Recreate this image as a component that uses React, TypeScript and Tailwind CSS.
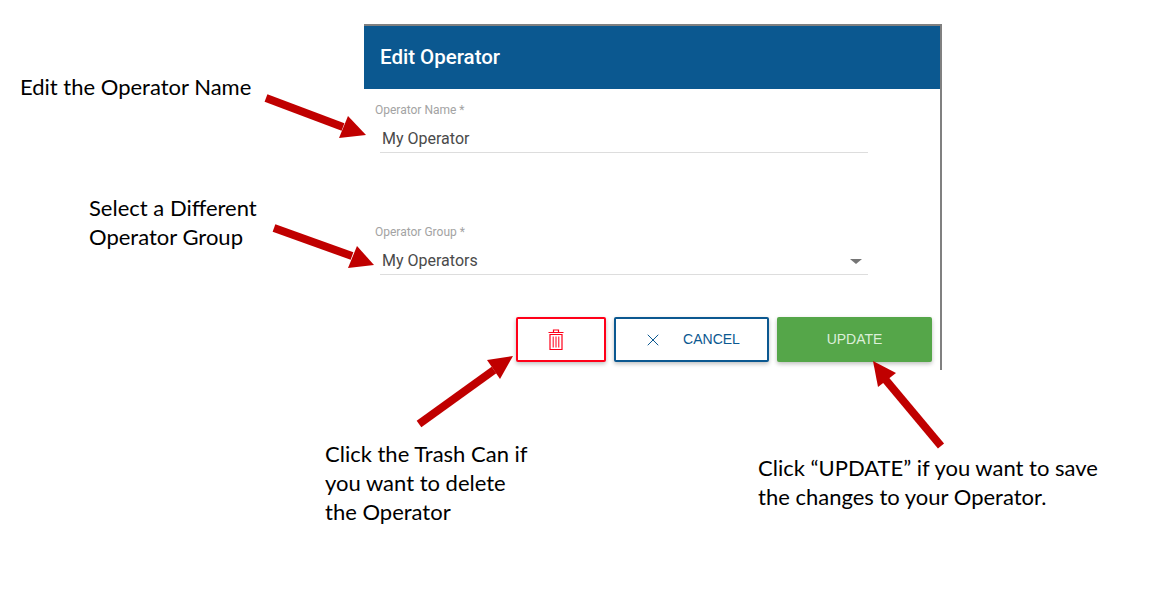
import React from 'react';
import { X } from 'lucide-react';

const arrows = [
  { tail: '266,98 343,127', head: '366,135 348,116 339,138' },
  { tail: '274,228 352,256', head: '374,265 357,246 348,268' },
  { tail: '419,424 494,370', head: '513,356 487,360 500,379' },
  { tail: '941,446 885,379', head: '873,361 896,373 878,387' },
];

function TrashIcon() {
  return (
    <svg className="mr-[10px]" width="16" height="21" viewBox="0 0 16 21" fill="none" stroke="#ff0019" strokeWidth="1.2">
      <path d="M0.5 3.5h15M5.5 3.5V1h5v2.5M2 5.5h12v15H2z" />
      <path d="M5.2 7.5v11M8 7.5v11M10.8 7.5v11" strokeWidth="1" />
    </svg>
  );
}

function Field({ label, value, select }: { label: string; value: string; select?: boolean }) {
  return (
    <div className="w-[488px]">
      <div className="-ml-[5px] h-[14px] text-[12px] leading-[14px] text-[#a3a3a3]">{label}</div>
      <div className="mt-[7px] flex h-[29px] items-center justify-between border-b border-[#dddddd] pl-[2px] pr-[6px] pt-[2px] text-[16px] text-[#4a4a4a]">
        <span>{value}</span>
        {select && <span className="h-0 w-0 border-x-[6px] border-t-[5px] border-x-transparent border-t-[#757575]" />}
      </div>
    </div>
  );
}

export default function App() {
  return (
    <div className="relative h-[602px] w-[1150px] overflow-hidden bg-white pl-[364px] pt-[24px] font-['Roboto',sans-serif]">
      <div className="h-[346px] w-[578px] border-r-2 border-t-2 border-[#808080]">
        <div className="flex h-[63px] items-center bg-[#0b5890] pb-[1px] pl-[16px] text-[20.5px] font-medium text-white">
          Edit Operator
        </div>
        <div className="flex flex-col pl-[16px] pt-[14px]">
          <Field label="Operator Name *" value="My Operator" />
          <div className="mt-[72px]">
            <Field label="Operator Group *" value="My Operators" select />
          </div>
          <div className="mt-[42px] flex gap-[8px] pl-[136px] font-['Liberation_Sans',sans-serif]">
            <button className="flex h-[45px] w-[90px] items-center justify-center rounded-[2px] border-2 border-[#ff0019] bg-white shadow-[0_2px_4px_rgba(0,0,0,0.25)]">
              <TrashIcon />
            </button>
            <button className="flex h-[45px] w-[155px] items-center justify-center gap-[20px] rounded-[2px] border-2 border-[#0b5890] bg-white text-[14px] text-[#0b5890] shadow-[0_2px_4px_rgba(0,0,0,0.25)]">
              <X size={20} strokeWidth={1.2} />
              CANCEL
            </button>
            <button className="flex h-[45px] w-[155px] items-center justify-center rounded-[2px] bg-[#55a649] text-[14px] text-[#dcefd9] shadow-[0_2px_4px_rgba(0,0,0,0.25)]">
              UPDATE
            </button>
          </div>
        </div>
      </div>

      <svg className="absolute left-0 top-0" width="1150" height="602">
        {arrows.map((a) => (
          <g key={a.head}>
            <polyline points={a.tail} stroke="#c00000" strokeWidth="8" fill="none" />
            <polygon points={a.head} fill="#c00000" />
          </g>
        ))}
      </svg>

      <div className="font-['Lato',sans-serif] text-[22px] leading-[29px] text-black">
        <div className="absolute left-[20px] top-[72px]">Edit the Operator Name</div>
        <div className="absolute left-[89px] top-[193px]">
          Select a Different
          <br />
          Operator Group
        </div>
        <div className="absolute left-[325px] top-[439px]">
          Click the Trash Can if
          <br />
          you want to delete
          <br />
          the Operator
        </div>
        <div className="absolute left-[758px] top-[453px]">
          Click “UPDATE” if you want to save
          <br />
          the changes to your Operator.
        </div>
      </div>
    </div>
  );
}
